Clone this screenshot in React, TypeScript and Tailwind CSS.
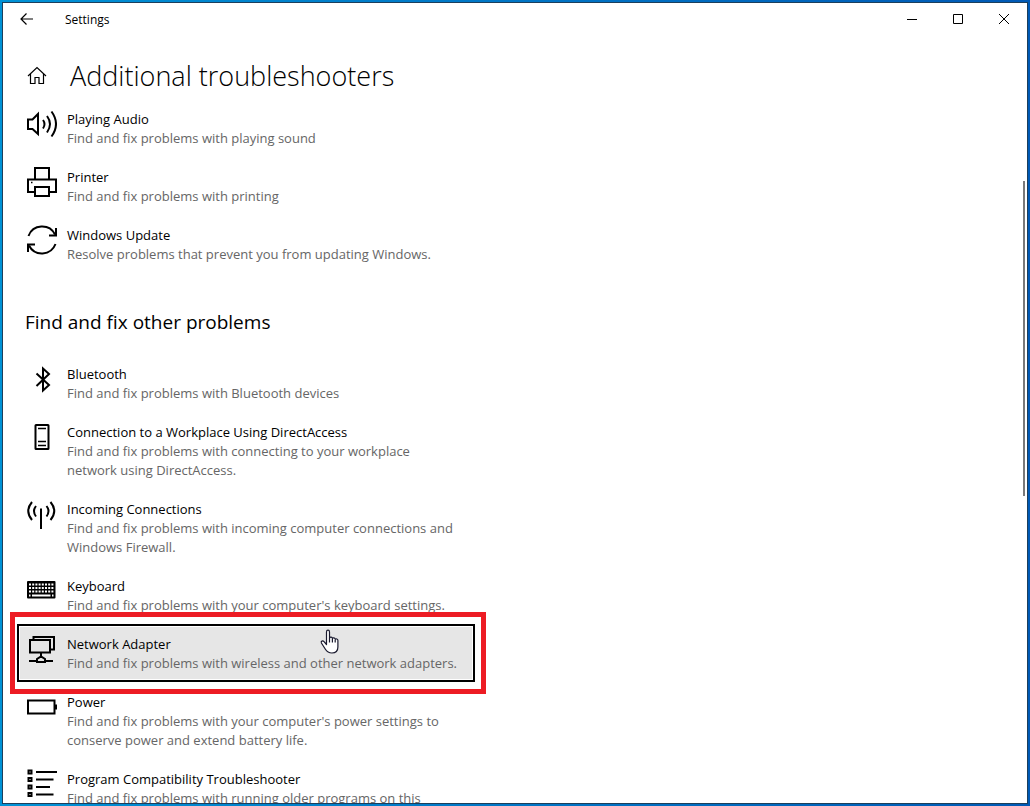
import type { ReactNode } from 'react';

type Troubleshooter = {
    title: string;
    description: string;
    icon: ReactNode;
    active?: boolean;
};

const TOP_ITEMS: Troubleshooter[] = [
    {
        title: 'Playing Audio',
        description: 'Find and fix problems with playing sound',
        icon: (
            <>
                <path d="M1 10.5h4.500L11 5v20l-5.500-5H1z" />
                <path d="M16 11q3 4 0 8.500M20 7q6 8 0 16.500M24.500 2.500q9 12.500 0 25" />
            </>
        ),
    },
    {
        title: 'Printer',
        description: 'Find and fix problems with printing',
        icon: (
            <>
                <path d="M8 12V1h14v11M8 25H1V12.500h28V25h-7" />
                <path d="M8 20h14v9H8z" />
                <path d="M4 15.500h1.500" strokeWidth="1.5" />
            </>
        ),
    },
    {
        title: 'Windows Update',
        description: 'Resolve problems that prevent you from updating Windows.',
        icon: (
            <>
                <path d="M1.500 11A14.500 14.500 0 0 1 28 9.500M28.500 19A14.500 14.500 0 0 1 2 20.500" />
                <path d="M29 3v7.500h-7M1 27v-7.500h7" />
            </>
        ),
    },
];

const OTHER_ITEMS: Troubleshooter[] = [
    {
        title: 'Bluetooth',
        description: 'Find and fix problems with Bluetooth devices',
        icon: <path d="M9.500 9.500 22 21l-6 5.500v-22l6 5.500L9.500 22" />,
    },
    {
        title: 'Connection to a Workplace Using DirectAccess',
        description: 'Find and fix problems with connecting to your workplace network using DirectAccess.',
        icon: (
            <>
                <rect x="8.5" y="3" width="13" height="24" rx="0.5" />
                <path d="M11 6.500h8M11 19.500h8M11 23.500h8" strokeWidth="1.5" />
            </>
        ),
    },
    {
        title: 'Incoming Connections',
        description: 'Find and fix problems with incoming computer connections and Windows Firewall.',
        icon: (
            <path d="M14 9.500V30M5 3q-7.500 9 0 18M9 7q-4 5 0 10.500M19.500 7q4 5 0 10.500M23.500 3q7.500 9 0 18" />
        ),
    },
    {
        title: 'Keyboard',
        description: "Find and fix problems with your computer's keyboard settings.",
        icon: (
            <>
                <rect x="0" y="5" width="28.5" height="17.5" rx="1" fill="currentColor" stroke="none" />
                <path d="M2 8.500h25M2 12h25M2 15.500h25" stroke="#fff" strokeDasharray="2 1.2" />
                <path d="M2 19.500h1.500M5 19.500h18.500M25 19.500h1.500" stroke="#fff" />
            </>
        ),
    },
    {
        title: 'Network Adapter',
        description: 'Find and fix problems with wireless and other network adapters.',
        active: true,
        icon: (
            <>
                <path d="M3 6h20v12.500H3zM6.500 6V3H27v12.500h-4M14 18.500V22" />
                <path d="M2 27h8M18 27h8M10 28v-3l4-2.500 4 2.500v3z" />
            </>
        ),
    },
    {
        title: 'Power',
        description: "Find and fix problems with your computer's power settings to conserve power and extend battery life.",
        icon: (
            <>
                <rect x="1" y="8.5" width="26.5" height="13" />
                <path d="M29 12.500v5" />
            </>
        ),
    },
    {
        title: 'Program Compatibility Troubleshooter',
        description: 'Find and fix problems with running older programs on this version of Windows.',
        icon: (
            <>
                <path d="M1.500 1.500h3v3h-3zM1.500 9h3v3h-3zM1.500 16.500h3v3h-3zM1.500 24h3v3h-3z" />
                <path d="M9 3h21M9 10.500h17.500M9 18h14M9 25.500h17.500" />
            </>
        ),
    },
];

function HandCursor() {
    return (
        <svg
            className="absolute left-[303px] top-[5px] z-20 h-[26px] w-5"
            viewBox="0 0 20 26"
            fill="#fff"
            stroke="#1a1a2e"
            strokeWidth="1.2"
            strokeLinejoin="round"
            aria-hidden="true"
        >
            <path d="M6.500 15.500V3c0-2.400 3-2.400 3 0v6c.5-1.300 2.800-1 2.900.5.6-1.100 2.700-.7 2.800.8.800-.9 2.700-.4 2.700 1.200V18c0 3.800-2.400 6-6 6-3.300 0-5-1.300-6.500-3.700l-4-6.300c-.8-1.700 1.300-2.900 2.600-1.400z" />
            <path d="M9.500 9v4.500M12.400 10v3.500M15.200 11v2.500" fill="none" />
        </svg>
    );
}

function TroubleshooterItem({ item }: { item: Troubleshooter }) {
    return (
        <li className="relative">
            <button
                type="button"
                className={
                    item.active
                        ? 'flex w-full items-start gap-2.5 border-2 border-black bg-[#e6e6e6] pb-[7px] pl-2 pr-3.5 pt-2 text-left shadow-[inset_0_0_0_1px_#fff]'
                        : 'flex w-full items-start gap-2.5 border-2 border-transparent pb-[7px] pl-2 pr-3.5 pt-2 text-left'
                }
            >
                <svg
                    className="h-[30px] w-[30px] shrink-0"
                    viewBox="0 0 30 30"
                    fill="none"
                    stroke="currentColor"
                    strokeWidth="2"
                    aria-hidden="true"
                >
                    {item.icon}
                </svg>
                <span className="min-w-0 flex-1 pt-px text-[13px] leading-[19px]">
                    <span className="block">{item.title}</span>
                    <span className="block text-[#666]">{item.description}</span>
                </span>
            </button>
            {item.active && (
                <>
                    <div className="pointer-events-none absolute -bottom-3 -left-[7px] -right-[11px] -top-3 z-10 border-[5px] border-[#ed1c24]" />
                    <HandCursor />
                </>
            )}
        </li>
    );
}

function TroubleshooterList({ items }: { items: Troubleshooter[] }) {
    return (
        <ul className="ml-3.5 max-w-[458px]">
            {items.map((item) => (
                <TroubleshooterItem key={item.title} item={item} />
            ))}
        </ul>
    );
}

function TitleBar() {
    return (
        <div className="flex h-8 shrink-0 items-center">
            <button type="button" aria-label="Back" className="flex h-8 w-12 items-center justify-center">
                <svg className="h-3.5 w-3.5" viewBox="0 0 14 14" fill="none" stroke="currentColor" strokeWidth="1.2">
                    <path d="M13 7H1.500M6.500 1.500 1 7l5.500 5.500" />
                </svg>
            </button>
            <span className="ml-3.5 flex-1 pt-0.5 text-xs">Settings</span>
            <button type="button" aria-label="Minimize" className="flex h-8 w-[46px] items-center justify-center">
                <svg className="h-2.5 w-2.5" viewBox="0 0 10 10" fill="none" stroke="currentColor">
                    <path d="M0 5.500h10" />
                </svg>
            </button>
            <button type="button" aria-label="Maximize" className="flex h-8 w-[46px] items-center justify-center">
                <svg className="h-2.5 w-2.5" viewBox="0 0 10 10" fill="none" stroke="currentColor">
                    <path d="M.5.5h9v9h-9z" />
                </svg>
            </button>
            <button type="button" aria-label="Close" className="flex h-8 w-[46px] items-center justify-center">
                <svg className="h-2.5 w-2.5" viewBox="0 0 10 10" fill="none" stroke="currentColor">
                    <path d="m0 0 10 10M10 0 0 10" />
                </svg>
            </button>
        </div>
    );
}

export default function App() {
    return (
        <div className="h-screen bg-linear-to-r from-[#0092d6] to-[#0059b5] p-0.5 font-['Open_Sans','Noto_Sans',sans-serif] text-black">
            <div className="relative flex h-full flex-col overflow-hidden border border-[#1c3f5c] bg-white">
                <TitleBar />

                <header className="mt-4 flex h-12 shrink-0 items-center gap-[23px] pl-6">
                    <a href="#home" aria-label="Home">
                        <svg className="h-5 w-5" viewBox="0 0 20 20" fill="none" stroke="currentColor" strokeWidth="1.2">
                            <path d="M1 11 10 2.500 19 11M3.500 9v9.500h4.500v-6h4v6h4.500V9" />
                        </svg>
                    </a>
                    <h1 className="pt-0.5 text-[27px] font-light">Additional troubleshooters</h1>
                </header>

                <main className="min-h-0 flex-1 overflow-hidden">
                    <TroubleshooterList items={TOP_ITEMS} />
                    <h2 className="mb-[19px] ml-[22px] mt-[37px] text-[19px] leading-[25px]">
                        Find and fix other problems
                    </h2>
                    <TroubleshooterList items={OTHER_ITEMS} />
                </main>

                {/* Scroll thumb */}
                <div className="absolute right-0.5 top-[178px] h-[315px] w-0.5 bg-[#7a7a7a]" />
            </div>
        </div>
    );
}
